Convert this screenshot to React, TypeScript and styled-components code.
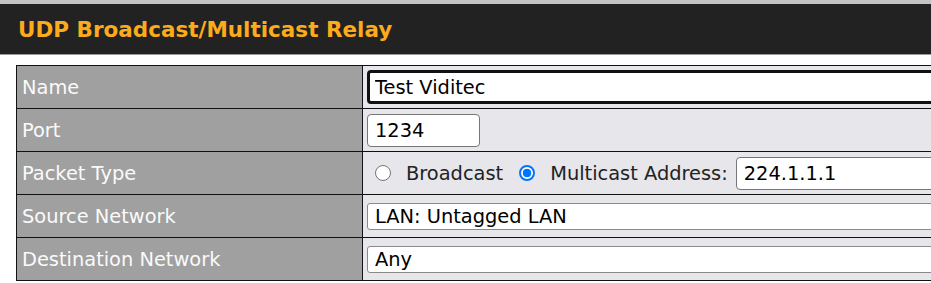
import React from "react";
import styled, { createGlobalStyle } from "styled-components";

const Global = createGlobalStyle`
  html, body { margin: 0; padding: 0; background: #ffffff; overflow: hidden; }
  body { font-family: "DejaVu Sans", Verdana, sans-serif; }
`;

const Page = styled.div`
  width: 931px;
  height: 283px;
  overflow: hidden;
`;

const Header = styled.div`
  border-top: 4px solid #c4c4c4;
  border-bottom: 1px solid #9a9a9a;
  background: #222222;
  height: 50px;
  display: flex;
  align-items: center;
  padding-left: 18px;
  width: 1000px;
`;

const Title = styled.h1`
  margin: 0;
  font-size: 21.5px;
  font-weight: bold;
  color: #fbab1c;
`;

const Content = styled.div`
  padding: 10px 0 0 16px;
`;

const Table = styled.table`
  border-collapse: collapse;
  table-layout: fixed;
  width: 1000px;
  border: 1px solid #111111;
`;

const LabelCol = styled.col`
  width: 346px;
`;

const Row = styled.tr`
  height: 43px;
  border-bottom: 1px solid #111111;
`;

const Label = styled.td`
  background: #a0a0a0;
  color: #fafafa;
  font-size: 19.4px;
  padding: 0 0 0 5px;
  border-right: 1px solid #111111;
  vertical-align: middle;
  white-space: nowrap;
`;

const Value = styled.td`
  background: #e6e6eb;
  padding: 0 0 0 4px;
  vertical-align: middle;
  color: #222;
  font-size: 19.4px;
  white-space: nowrap;
`;

const TextInput = styled.input<{ $w?: number; $focus?: boolean }>`
  box-sizing: border-box;
  font-family: "DejaVu Sans", Verdana, sans-serif;
  font-size: 19.4px;
  height: ${(p) => (p.$focus ? "34px" : "33px")};
  width: ${(p) => (p.$w ? `${p.$w}px` : "700px")};
  padding: 0 ${(p) => (p.$focus ? "5px" : "7px")};
  border: ${(p) => (p.$focus ? "3px solid #111111" : "1px solid #767676")};
  border-radius: 4px;
  background: #ffffff;
  color: #000;
  display: block;
  outline: none;
  flex: none;
`;

const Select = styled.select`
  box-sizing: border-box;
  font-family: "DejaVu Sans", Verdana, sans-serif;
  font-size: 19.4px;
  height: 27px;
  width: 700px;
  padding: 0 0 0 7px;
  border: 1px solid #8a8a8a;
  border-radius: 3px;
  background: #ffffff;
  color: #000;
  appearance: none;
  display: block;
`;

const RadioGroup = styled.div`
  display: flex;
  align-items: center;
  padding-left: 8px;
  white-space: nowrap;
`;

const Radio = styled.input`
  appearance: none;
  box-sizing: border-box;
  width: 16px;
  min-width: 16px;
  height: 16px;
  margin: 0 15px 0 0;
  border-radius: 50%;
  border: 1px solid #767676;
  background: #ffffff;
  flex: none;
  &:checked {
    border: 2px solid #0075ff;
    background: radial-gradient(circle, #0075ff 0 4px, #ffffff 4.6px);
  }
`;

const RadioLabel = styled.label`
  font-size: 19.4px;
  color: #222;
  margin-right: 16px;
  display: flex;
  align-items: center;
  flex: none;
  white-space: nowrap;
  &:last-of-type {
    margin-right: 8px;
  }
`;

export default function App() {
  return (
    <Page>
      <Global />
      <Header>
        <Title>UDP Broadcast/Multicast Relay</Title>
      </Header>
      <Content>
        <Table>
          <colgroup>
            <LabelCol />
            <col />
          </colgroup>
          <tbody>
            <Row>
              <Label>Name</Label>
              <Value>
                <TextInput $focus defaultValue="Test Viditec" />
              </Value>
            </Row>
            <Row>
              <Label>Port</Label>
              <Value>
                <TextInput $w={113} defaultValue="1234" />
              </Value>
            </Row>
            <Row>
              <Label>Packet Type</Label>
              <Value>
                <RadioGroup>
                  <RadioLabel>
                    <Radio type="radio" name="pt" />
                    Broadcast
                  </RadioLabel>
                  <RadioLabel>
                    <Radio type="radio" name="pt" defaultChecked />
                    Multicast Address:
                  </RadioLabel>
                  <TextInput $w={300} defaultValue="224.1.1.1" />
                </RadioGroup>
              </Value>
            </Row>
            <Row>
              <Label>Source Network</Label>
              <Value>
                <Select defaultValue="lan">
                  <option value="lan">LAN: Untagged LAN</option>
                </Select>
              </Value>
            </Row>
            <Row>
              <Label>Destination Network</Label>
              <Value>
                <Select defaultValue="any">
                  <option value="any">Any</option>
                </Select>
              </Value>
            </Row>
          </tbody>
        </Table>
      </Content>
    </Page>
  );
}
